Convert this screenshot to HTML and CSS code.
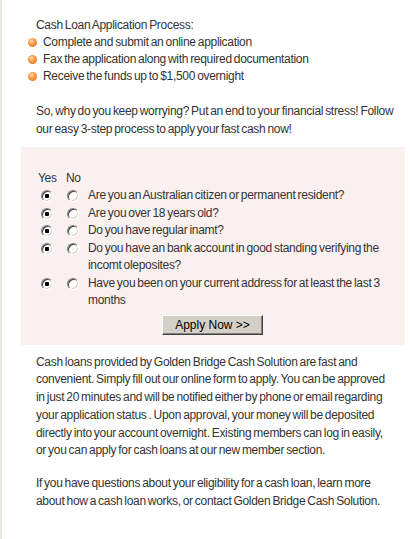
FILE: index.html
```html
<!DOCTYPE html>
<html lang="en">
<head>
  <meta charset="UTF-8">
  <meta name="viewport" content="width=device-width, initial-scale=1.0">
  <title>Cash Loan Application</title>
  <link rel="stylesheet" href="styles.css">
</head>
<body>
  <div class="page">
    <div class="intro">Cash Loan Application Process:</div>
    <ul class="steps">
      <li><span class="dot"></span>Complete and submit an online application</li>
      <li><span class="dot"></span>Fax the application along with required documentation</li>
      <li><span class="dot"></span>Receive the funds up to $1,500 overnight</li>
    </ul>
    <p class="lead">So, why do you keep worrying? Put an end to your financial stress! Follow our easy 3-step process to apply your fast cash now!</p>

    <form class="quiz">
      <div class="quiz-head"><span>Yes</span><span>No</span></div>
      <div class="quiz-row">
        <input type="radio" name="q1" class="yes" checked>
        <input type="radio" name="q1" class="no">
        <span>Are you an Australian citizen or permanent resident?</span>
      </div>
      <div class="quiz-row">
        <input type="radio" name="q2" class="yes" checked>
        <input type="radio" name="q2" class="no">
        <span>Are you over 18 years old?</span>
      </div>
      <div class="quiz-row">
        <input type="radio" name="q3" class="yes" checked>
        <input type="radio" name="q3" class="no">
        <span>Do you have regular inamt?</span>
      </div>
      <div class="quiz-row">
        <input type="radio" name="q4" class="yes" checked>
        <input type="radio" name="q4" class="no">
        <span>Do you have an bank account in good standing verifying the incomt oleposites?</span>
      </div>
      <div class="quiz-row">
        <input type="radio" name="q5" class="yes" checked>
        <input type="radio" name="q5" class="no">
        <span>Have you been on your current address for at least the last 3 months</span>
      </div>
      <div class="quiz-submit"><button type="button" class="apply">Apply Now &gt;&gt;</button></div>
    </form>

    <p class="body-text">Cash loans provided by Golden Bridge Cash Solution are fast and convenient. Simply fill out our online form to apply. You can be approved in just 20 minutes and will be notified either by phone or email regarding your application status . Upon approval, your money will be deposited directly into your account overnight. Existing members can log in easily, or you can apply for cash loans at our new member section.</p>
    <p class="body-text">If you have questions about your eligibility for a cash loan, learn more about how a cash loan works, or contact Golden Bridge Cash Solution.</p>
  </div>
</body>
</html>
```

FILE: styles.css
```css
body {
  margin: 0;
  background: #fff;
  font-family: "Liberation Sans", Arial, sans-serif;
  font-size: 12px;
  letter-spacing: -0.3px;
  word-spacing: -1px;
  color: #333;
}

.page {
  border-left: 2px solid #ebe8e0;
  min-height: 539px;
  box-sizing: border-box;
  padding: 17px 8px 0 19px;
}

.intro {
  padding-left: 15px;
  line-height: 17px;
}

.steps {
  list-style: none;
  margin: 0;
  padding: 0 0 0 7px;
  line-height: 17px;
}

.steps li {
  display: flex;
  align-items: center;
}

.dot {
  width: 9px;
  height: 9px;
  border-radius: 50%;
  margin-right: 6px;
  background: radial-gradient(circle at 40% 35%, #ffd9b0 0, #f7953f 45%, #e0671a 100%);
}

.lead {
  margin: 17px 10px 9px 15px;
  line-height: 18px;
}

.quiz {
  background: #faf0ef;
  padding: 22px 18px 10px 17px;
  margin: 0;
}

.quiz-head {
  display: flex;
  line-height: 18px;
}

.quiz-head span:first-child {
  width: 28px;
}

.quiz-row {
  display: grid;
  grid-template-columns: 28px 22px 1fr;
  line-height: 17.5px;
}

.quiz-row input {
  appearance: none;
  -webkit-appearance: none;
  width: 12px;
  height: 12px;
  margin: 3px 0 0 3px;
  border-radius: 50%;
  border: 1px solid;
  border-color: #808080 #fff #fff #808080;
  box-shadow: inset 1px 1px 0 #404040, inset -1px -1px 0 #d4d0c8;
  background: #fff;
  box-sizing: border-box;
}

.quiz-row input.no {
  margin-left: 1px;
}

.quiz-row input:checked {
  background: radial-gradient(circle, #000 0, #000 2px, #fff 2.5px);
}

.quiz-submit {
  text-align: center;
  padding-top: 5px;
}

.apply {
  width: 101px;
  height: 20px;
  padding: 0;
  font-family: "Liberation Sans", Arial, sans-serif;
  font-size: 12px;
  letter-spacing: 0;
  word-spacing: 0;
  color: #000;
  background: #d4d0c8;
  border: 1px solid;
  border-color: #fff #404040 #404040 #fff;
  box-shadow: inset -1px -1px 0 #808080;
}

.body-text {
  margin: 9px 20px 15px 15px;
  line-height: 17.8px;
}
```
